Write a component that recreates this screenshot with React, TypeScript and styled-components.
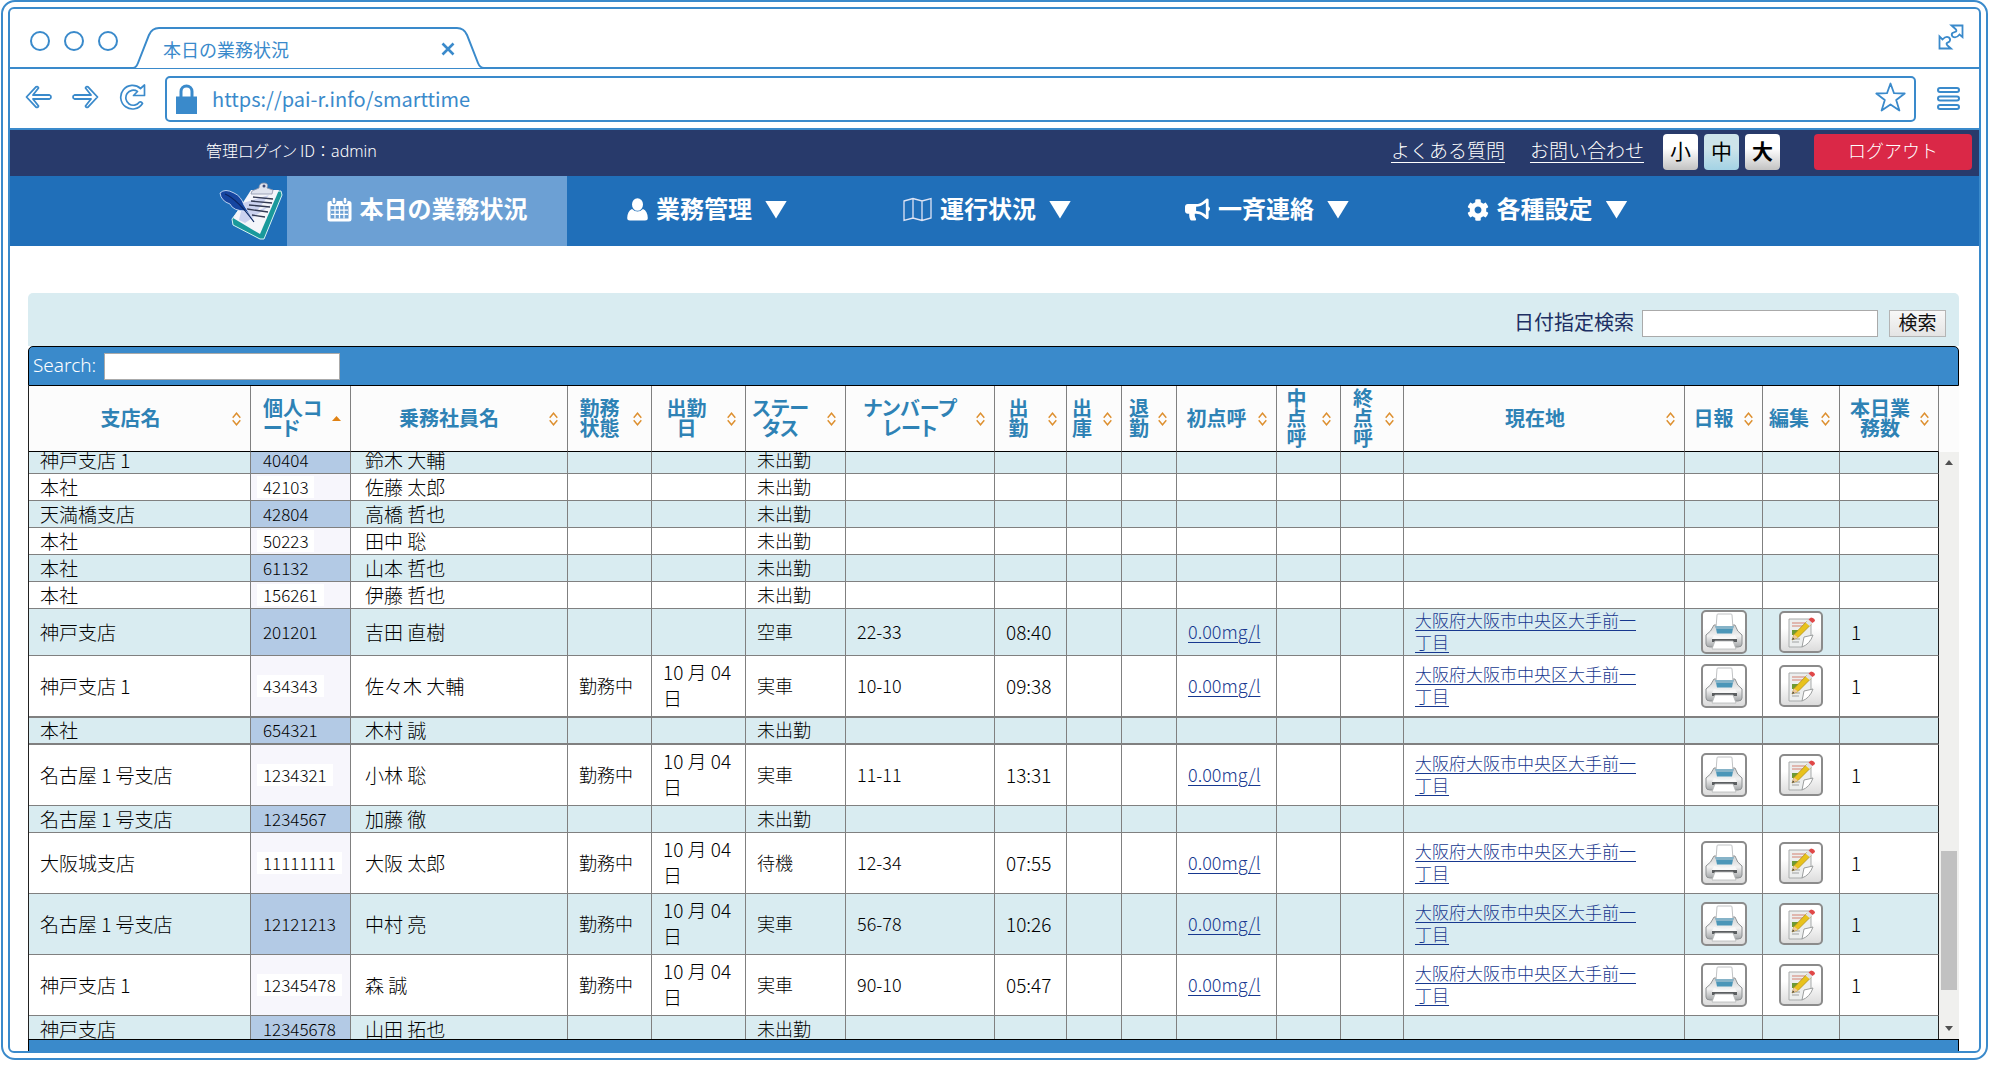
import React, { useLayoutEffect, useRef } from 'react';
import styled, { createGlobalStyle } from 'styled-components';
import { FaBullhorn, FaCog } from 'react-icons/fa';

const BLUE = '#3a8acb';
const LINE = '#808080';
const PALE = '#d9ecf1';
const JP = '"Noto Sans CJK JP", "Noto Sans", sans-serif';

const GlobalStyle = createGlobalStyle`
  *, *::before, *::after { box-sizing: border-box; }
  html, body { margin: 0; background: #fff; }
  body, button, input { font-family: ${JP}; }
  button { padding: 0; border: 0; background: none; color: inherit; cursor: pointer; }
`;

/* ---------- browser frame ---------- */

const OuterFrame = styled.div`
  height: calc(100vh - 6px);
  margin: 0 1px 6px;
  padding: 5px;
  border: 2px solid ${BLUE};
  border-radius: 14px;
  display: flex;
`;

const InnerFrame = styled.div`
  flex: 1;
  min-width: 0;
  border: 2px solid ${BLUE};
  border-radius: 6px;
  display: flex;
  flex-direction: column;
`;

const TabStrip = styled.div`
  height: 60px;
  display: flex;
  align-items: flex-end;
  padding: 0 15px 0 20px;
  box-shadow: inset 0 -2px 0 ${BLUE};
`;

const WindowDots = styled.div`
  display: flex;
  gap: 14px;
  padding-bottom: 18px;
  width: 103px;
`;

const Dot = styled.button`
  width: 20px;
  height: 20px;
  border: 2px solid ${BLUE};
  border-radius: 50%;
`;

const Tab = styled.div`
  position: relative;
  width: 352px;
  height: 42px;
  padding: 2px 30px 0 30px;
  display: flex;
  align-items: center;
  justify-content: space-between;
  color: ${BLUE};
  font-size: 18px;
  line-height: 28px;
`;

const TabShape = styled.svg`
  position: absolute;
  inset: 0;
`;

const TabTitle = styled.span`
  position: relative;
`;

const TabClose = styled.button`
  position: relative;
  width: 14px;
  height: 28px;
  display: flex;
  align-items: center;
`;

const ExpandButton = styled.button`
  margin-left: auto;
  padding-bottom: 19px;
  line-height: 0;
`;

const AddressRow = styled.div`
  height: 61px;
  display: flex;
  align-items: center;
  padding: 0 19px 0 15px;
  border-bottom: 2px solid ${BLUE};
  line-height: 0;
`;

const HistoryButtons = styled.div`
  display: flex;
  gap: 20px;
  width: 140px;
`;

const AddressBox = styled.div`
  flex: 1;
  height: 46px;
  display: flex;
  align-items: center;
  padding: 0 8px 0 9px;
  border: 2px solid ${BLUE};
  border-radius: 5px;
`;

const AddressInput = styled.input`
  flex: 1;
  height: 30px;
  margin: 0 16px 0 15px;
  padding: 0;
  border: 0;
  outline: 0;
  color: ${BLUE};
  font-size: 20px;
`;

const MenuButton = styled.button`
  margin-left: 21px;
  line-height: 0;
`;

/* ---------- application header ---------- */

const AccountBar = styled.header`
  height: 46px;
  display: flex;
  align-items: center;
  padding: 0 7px 2px 196px;
  background: #283a6b;
  color: #fff;
  font-size: 16px;
  font-weight: 300;
`;

const LoginId = styled.span`
  flex: 1;
  padding-bottom: 5px;
`;

const LoginLabel = styled.span`
  font-feature-settings: 'palt';
`;

const LoginName = styled.span`
  font-family: "Noto Sans", sans-serif;
`;

const HelpLinks = styled.nav`
  display: flex;
  gap: 25px;
  margin-right: 19px;
  padding-bottom: 5px;
  font-size: 19px;
`;

const HelpLink = styled.a`
  color: #fff;
  text-underline-offset: 4px;
  text-decoration-thickness: 1px;
`;

const SizeButtons = styled.div`
  display: flex;
  gap: 6px;
  margin-right: 34px;
`;

const SizeButton = styled.button<{ $active?: boolean; $bold?: boolean }>`
  width: 35px;
  height: 36px;
  padding-bottom: 4px;
  border-radius: 4px;
  background: ${p => p.$active
    ? 'linear-gradient(#cde4ea 40%, #a3d2e4)'
    : 'linear-gradient(#fff 40%, #c2c2c2)'};
  color: #000;
  font-size: 21px;
  font-weight: ${p => (p.$bold ? 700 : 400)};
  line-height: 32px;
`;

const LogoutButton = styled.button`
  width: 158px;
  height: 36px;
  padding-bottom: 4px;
  border-radius: 4px;
  background: #da2847;
  color: #fff;
  font-size: 18px;
  font-weight: 300;
  line-height: 32px;
`;

const MainNav = styled.nav`
  height: 70px;
  display: flex;
  align-items: stretch;
  padding-left: 209px;
  background: #206fb9;
`;

const Logo = styled.a`
  width: 68px;
  display: flex;
  align-items: center;
`;

const NavItem = styled.button<{ $active?: boolean }>`
  flex: 0 1 280px;
  display: flex;
  align-items: center;
  justify-content: center;
  gap: 8px;
  padding-bottom: 3px;
  background: ${p => (p.$active ? '#6ca0d4' : 'none')};
  color: #fff;
  font-size: 24px;
  font-weight: 700;
  line-height: 36px;
  white-space: nowrap;
`;

const NavText = styled.span`
  padding-bottom: 3px;
`;

const NavCaret = styled.span`
  width: 22px;
  height: 18px;
  margin-left: 5px;
  background: #fff;
  clip-path: polygon(0 0, 100% 0, 50% 100%);
`;

/* ---------- list ---------- */

const Content = styled.main`
  flex: 1;
  min-height: 0;
  display: flex;
  flex-direction: column;
  padding: 47px 20px 0 18px;
`;

const DateSearch = styled.form`
  height: 53px;
  display: flex;
  align-items: center;
  justify-content: flex-end;
  padding: 7px 13px 0;
  background: ${PALE};
  border-radius: 5px 5px 0 0;
  color: #1d2f63;
  font-size: 20px;
`;

const FieldLabel = styled.label`
  padding-bottom: 3px;
  line-height: 28px;
`;

const SearchField = styled.input`
  width: 236px;
  height: 27px;
  margin: 0 11px 0 8px;
  padding: 0 6px;
  border: 1px solid #aaa;
  background: #fff;
  font-size: 18px;
`;

const SearchButton = styled.button`
  width: 57px;
  height: 27px;
  padding-bottom: 2px;
  border: 1px solid #b4b4b4;
  background: linear-gradient(#f8f8f8, #e4e4e4);
  color: #111;
  font-size: 19px;
  line-height: 22px;
`;

const FilterBar = styled.div`
  height: 40px;
  display: flex;
  align-items: center;
  padding: 0 4px;
  border: 1px solid #000;
  border-radius: 5px 5px 0 0;
  background: ${BLUE};
  color: #fff;
  font-family: "Noto Sans", sans-serif;
  font-size: 19px;
  font-weight: 300;
`;

const HeadArea = styled.div`
  padding-right: 20px;
  border-left: 1px solid #222;
  background: #fcfcfc;
`;

const BodyArea = styled.div`
  flex: 1;
  min-height: 0;
  display: flex;
  border-left: 1px solid #222;
`;

const Scroller = styled.div`
  flex: 1;
  min-width: 0;
  overflow: hidden;
`;

const Grid = styled.table`
  width: 100%;
  table-layout: fixed;
  border-collapse: separate;
  border-spacing: 0;
`;

const HeadCell = styled.th`
  height: 66px;
  padding: 0;
  border-right: 1px solid ${LINE};
  border-bottom: 1px solid #000;
  color: #2e82b5;
  font-size: 20px;
  font-weight: 700;
  line-height: 20px;
`;

const HeadInner = styled.div`
  display: flex;
  align-items: center;
`;

const HeadLabel = styled.span<{ $left?: boolean }>`
  flex: 1;
  padding-bottom: 2px;
  padding-left: ${p => (p.$left ? 12 : 0)}px;
  text-align: ${p => (p.$left ? 'left' : 'center')};
  white-space: nowrap;
  font-feature-settings: 'palt';
`;

const SortButton = styled.button<{ $slot: number }>`
  width: ${p => p.$slot}px;
  padding-right: 9px;
  display: flex;
  justify-content: flex-end;
  flex: none;
  & > svg { flex: none; }
`;

type RowSize = 'line' | 'mid' | 'tall';
const rowHeight: Record<RowSize, number> = { line: 27, mid: 47, tall: 61 };

const Row = styled.tr<{ $size: RowSize; $thick?: boolean }>`
  height: ${p => rowHeight[p.$size] + (p.$thick && p.$size === 'tall' ? 1 : 0)}px;
  background: #fff;
  &:nth-child(odd) { background: ${PALE}; }
  & > td { border-bottom: ${p => (p.$thick ? 2 : 1)}px solid ${LINE}; }
`;

const Cell = styled.td<{ $small?: boolean }>`
  padding: 0 0 2px 11px;
  border-right: 1px solid ${LINE};
  color: #000;
  font-size: ${p => (p.$small ? 18 : 19)}px;
  font-weight: 300;
  line-height: 23px;
  white-space: nowrap;
  &:last-child { border-right-color: #222; }
`;

const CodeCell = styled(Cell)`
  padding-left: 6px;
  background: #f7f6fc;
  font-size: 17px;
  tr:nth-child(odd) > & { background: #b3cae5; }
`;

const Code = styled.span`
  display: inline-block;
  padding: 0 6px;
  line-height: 22px;
  tr:nth-child(even) > td > & { background: #fff; }
`;

const NameCell = styled(Cell)`
  padding-left: 14px;
`;

const DateCell = styled(Cell)`
  line-height: 26px;
`;

const IconCell = styled(Cell)`
  padding: 0;
  text-align: center;
  line-height: 0;
`;

const CellLink = styled.a`
  color: #17388f;
  text-underline-offset: 3px;
  text-decoration-thickness: 1px;
`;

const AddressLink = styled(CellLink)`
  font-size: 17px;
  line-height: 22px;
  display: inline-block;
`;

const ToolButton = styled.button<{ $w: number; $h: number }>`
  width: ${p => p.$w}px;
  height: ${p => p.$h}px;
  border: 2px solid #8b8b8b;
  border-radius: 5px;
  background: linear-gradient(#fff 40%, #dcdcdc);
  display: inline-flex;
  align-items: center;
  justify-content: center;
`;

const ScrollTrack = styled.div`
  width: 20px;
  display: flex;
  flex-direction: column;
  align-items: center;
  padding: 8px 2px;
  background: #f0f0ee;
`;

const ScrollThumb = styled.div`
  width: 16px;
  height: 139px;
  margin: auto 0 36px;
  background: #c1c1c1;
`;

const Arrow = styled.span<{ $down?: boolean }>`
  width: 8px;
  height: 5px;
  background: #505050;
  clip-path: ${p => (p.$down ? 'polygon(0 0, 100% 0, 50% 100%)' : 'polygon(0 100%, 100% 100%, 50% 0)')};
`;

const FootBar = styled.div`
  height: 12px;
  border: 1px solid #000;
  border-bottom: 0;
  background: ${BLUE};
`;

/* ---------- drawings ---------- */

const ExpandIcon = () => (
  <svg width="26" height="26" viewBox="0 0 26 26" fill="#fff" stroke={BLUE} strokeWidth="1.8">
    <path d="M13.500 1.500H24.500V13L21.500 10.500Q18 15 14.500 12.500Q13 10.500 14.500 9L18 7.500Q19 6.500 17.500 5Z" />
    <path d="M1.500 12.500L4.500 15.500Q8 11.500 11 13.500Q13 15.500 11.500 17.500L9 19Q8 20 9.500 21.500L13 24.500H1.500Z" />
  </svg>
);

const BackIcon = () => (
  <svg width="27" height="24" viewBox="0 0 27 24" fill="#fff" stroke={BLUE} strokeWidth="1.8" strokeLinejoin="round">
    <path d="M1.500 12L11 1.800Q13 1 13.500 3L8 10H24.500Q26 10.500 26 12T24.500 14H8L13.500 21Q13 23 11 22.200Z" />
  </svg>
);

const ForwardIcon = () => (
  <svg width="27" height="24" viewBox="0 0 27 24" fill="#fff" stroke={BLUE} strokeWidth="1.8" strokeLinejoin="round">
    <path d="M25.500 12L16 1.800Q14 1 13.500 3L19 10H2.500Q1 10.500 1 12T2.500 14H19L13.500 21Q14 23 16 22.200Z" />
  </svg>
);

const ReloadIcon = () => (
  <svg width="27" height="26" viewBox="0 0 27 26" fill="#fff" stroke={BLUE} strokeWidth="1.700" strokeLinejoin="round">
    <path d="M21.500 4.500L25.500 1V11.500H14.500L18.500 7.500A7.500 7.500 0 1 0 20.500 18Q22.500 17.500 23.500 19.500A11.800 11.800 0 1 1 21.500 4.500Z" />
  </svg>
);

const LockIcon = () => (
  <svg width="21" height="30" viewBox="0 0 21 30">
    <path d="M5 14V7.500A5.500 5.500 0 0 1 16 7.500V14" fill="none" stroke={BLUE} strokeWidth="3" />
    <rect x="0" y="12.500" width="21" height="17.500" fill={BLUE} />
  </svg>
);

const StarIcon = () => (
  <svg width="31" height="30" viewBox="0 0 31 30" fill="none" stroke={BLUE} strokeWidth="1.800" strokeLinejoin="round">
    <path d="M15.500 1.500L19 11.200L29.700 11.500L21.200 18L24.400 28.500L15.500 22.500L6.600 28.500L9.800 18L1.300 11.500L12 11.200Z" />
  </svg>
);

const MenuIcon = () => (
  <svg width="23" height="23" viewBox="0 0 23 23" fill="#fff" stroke={BLUE} strokeWidth="2">
    <rect x="1" y="1" width="21" height="4" rx="2" />
    <rect x="1" y="9.500" width="21" height="4" rx="2" />
    <rect x="1" y="18" width="21" height="4" rx="2" />
  </svg>
);

const LogoMark = () => (
  <svg width="64" height="60" viewBox="0 0 64 60">
    <path d="M33 11L62 10L63 14L45 58L41 58L14 44L13 38Z" fill="#19999b" stroke="#d8f3f3" strokeWidth="1" />
    <path d="M32 9L60 9L41 53L14 37Z" fill="#f4f5fa" />
    <path d="M24 22L50 14L38 30L52 24L26 42L20 39Z" fill="#b9c3ea" opacity=".7" />
    <path d="M33 10L40 7Q40 2 45 2T48 7L54 9L53 13L32 13Z" fill="#dfe3ee" stroke="#8c93a8" strokeWidth=".8" />
    <circle cx="45" cy="5" r="1.500" fill="#3f4b78" />
    <path d="M34 16L54 18M32 20L53 22M30 24L51 26M28 28L49 31M33 34L46 36" stroke="#333a52" strokeWidth="1.300" />
    <path d="M1 12Q6 7 15 12Q22 15 25 24L35 40L27 30Q14 30 11 23Q2 20 1 12Z" fill="#1645a0" stroke="#e2ecff" strokeWidth=".8" />
    <path d="M6 13Q18 18 35 41" fill="none" stroke="#0b2560" strokeWidth="1.200" />
  </svg>
);

const CalendarIcon = () => (
  <svg width="25" height="25" viewBox="0 0 25 25">
    <path fillRule="evenodd" fill="#fff" d="M3 4H22Q24.500 4 24.500 6.500V22Q24.500 24.500 22 24.500H3Q.5 24.500 .5 22V6.500Q.5 4 3 4ZM3.500 9V21.500H21.500V9Z" />
    <path fill="none" stroke="#fff" strokeWidth="1.300" d="M4 13.200H21M4 17.300H21M8 9V21.500M12.500 9V21.500M17 9V21.500" />
    <path stroke="#6ca0d4" strokeWidth="5" strokeLinecap="round" d="M7 3V5M18 3V5" />
    <path stroke="#fff" strokeWidth="2.600" strokeLinecap="round" d="M7 2V5M18 2V5" />
  </svg>
);

const UserIcon = () => (
  <svg width="21" height="23" viewBox="0 0 21 23" fill="#fff">
    <ellipse cx="10.500" cy="6.500" rx="5.500" ry="6.300" />
    <path d="M5 11Q10.500 16 16 11Q20.500 13 20.800 20Q20.800 22.500 18 22.500H3Q.2 22.500 .2 20Q.5 13 5 11Z" />
  </svg>
);

const MapIcon = () => (
  <svg width="29" height="25" viewBox="0 0 29 25" fill="none" stroke="#dfe4f4" strokeWidth="1.300">
    <path d="M1 4L10 1.500L19 4L28 1.500V21L19 23.500L10 21L1 23.500ZM10 1.500V21M19 4V23.500" />
  </svg>
);

const SortIcon = ({ active }: { active?: boolean }) =>
  active ? (
    <svg width="9" height="5" viewBox="0 0 9 5"><path d="M0 5L4.500 0L9 5Z" fill="#e08214" /></svg>
  ) : (
    <svg width="9" height="14" viewBox="0 0 9 14" fill="none" stroke="#dd8f2e" strokeWidth="1.400">
      <path d="M.7 5.800L4.500 1.200L8.300 5.800M.7 8.200L4.500 12.800L8.300 8.200" />
    </svg>
  );

const PrinterIcon = () => (
  <svg width="42" height="40" viewBox="2 2 42 40">
    <defs>
      <linearGradient id="prBody" x1="0" y1="0" x2="0" y2="1">
        <stop offset="0" stopColor="#cfd1d2" />
        <stop offset=".5" stopColor="#f2f2f2" />
        <stop offset="1" stopColor="#a4a7a9" />
      </linearGradient>
    </defs>
    <path d="M13 15H34Q36 22 41 25V34Q41 37 37 37H9Q5 37 5 34V25Q10 22 13 15Z" fill="url(#prBody)" stroke="#8f9294" strokeWidth="1" />
    <path d="M16 5Q16 4 17 4H30Q31 4 31 5L32 18H15Z" fill="#fff" stroke="#c0c2c4" strokeWidth="1" />
    <path d="M14.500 16H32.500L31 23.500H16Z" fill="#4b96b8" />
    <path d="M14.500 16H32.500L32 19H15Z" fill="#86b3c8" />
    <path d="M13 25Q23 28 34 25L36 29H11Z" fill="#f8f8f8" />
    <rect x="11" y="29" width="25" height="3" fill="#5b5e60" />
    <path d="M14 31H32L35 39H11Z" fill="#fff" stroke="#b5b7b8" strokeWidth=".8" />
  </svg>
);

const EditIcon = () => (
  <svg width="32" height="34" viewBox="0 0 32 34">
    <path d="M4 4H26V21L17 32L4 32Z" fill="#eceeee" stroke="#a8abab" strokeWidth="1" />
    <path d="M17 32L19 22L28 20Q25 29 17 32Z" fill="#fff" stroke="#9c9f9f" strokeWidth="1" />
    <path d="M7 8H22M7 11H20" stroke="#dba59b" strokeWidth="1.500" />
    <rect x="7" y="15" width="6" height="5" fill="#6d9a35" />
    <path d="M7 24H15M7 27H14" stroke="#b9bcbc" strokeWidth="1.400" />
    <path d="M7 25L9 19.500L22 6L26 9.500L13 22.500Z" fill="#e8c21c" stroke="#a98a14" strokeWidth=".7" />
    <path d="M7 25L9 19.500L13 22.500Z" fill="#efc9a0" />
    <path d="M7 25L8 22.500L9.500 24Z" fill="#444" />
    <path d="M20.500 7.500L23.500 4.500L27.500 8L24.500 11Z" fill="#dfe2e6" />
    <path d="M23.500 4.500L26 2.500Q30 3 30 6L27.500 8Z" fill="#e04848" />
  </svg>
);

/* ---------- data ---------- */

interface Column {
  lines: string[];
  width: number;
  slot: number;
  sorted?: boolean;
}

const columns: Column[] = [
  { lines: ['支店名'], width: 222, slot: 18 },
  { lines: ['個人コ', 'ード'], width: 100, slot: 20, sorted: true },
  { lines: ['乗務社員名'], width: 217, slot: 20 },
  { lines: ['勤務', '状態'], width: 84, slot: 20 },
  { lines: ['出勤', '日'], width: 94, slot: 24 },
  { lines: ['ステー', 'タス'], width: 100, slot: 30 },
  { lines: ['ナンバープ', 'レート'], width: 149, slot: 20 },
  { lines: ['出', '勤'], width: 72, slot: 24 },
  { lines: ['出', '庫'], width: 55, slot: 24 },
  { lines: ['退', '勤'], width: 55, slot: 20 },
  { lines: ['初点呼'], width: 100, slot: 20 },
  { lines: ['中', '点', '呼'], width: 64, slot: 24 },
  { lines: ['終', '点', '呼'], width: 63, slot: 18 },
  { lines: ['現在地'], width: 281, slot: 18 },
  { lines: ['日報'], width: 78, slot: 20 },
  { lines: ['編集'], width: 77, slot: 24 },
  { lines: ['本日業', '務数'], width: 99, slot: 18 },
];

interface Driver {
  branch: string;
  code: string;
  name: string;
  status: string;
  size: RowSize;
  working?: boolean;
  plate?: string;
  start?: string;
  thick?: boolean;
}

const drivers: Driver[] = [
  { branch: '神戸支店 1', code: '40404', name: '鈴木 大輔', status: '未出勤', size: 'line' },
  { branch: '本社', code: '42103', name: '佐藤 太郎', status: '未出勤', size: 'line' },
  { branch: '天満橋支店', code: '42804', name: '高橋 哲也', status: '未出勤', size: 'line' },
  { branch: '本社', code: '50223', name: '田中 聡', status: '未出勤', size: 'line' },
  { branch: '本社', code: '61132', name: '山本 哲也', status: '未出勤', size: 'line' },
  { branch: '本社', code: '156261', name: '伊藤 哲也', status: '未出勤', size: 'line' },
  { branch: '神戸支店', code: '201201', name: '吉田 直樹', status: '空車', size: 'mid', plate: '22-33', start: '08:40' },
  { branch: '神戸支店 1', code: '434343', name: '佐々木 大輔', status: '実車', size: 'tall', working: true, plate: '10-10', start: '09:38', thick: true },
  { branch: '本社', code: '654321', name: '木村 誠', status: '未出勤', size: 'line', thick: true },
  { branch: '名古屋 1 号支店', code: '1234321', name: '小林 聡', status: '実車', size: 'tall', working: true, plate: '11-11', start: '13:31' },
  { branch: '名古屋 1 号支店', code: '1234567', name: '加藤 徹', status: '未出勤', size: 'line' },
  { branch: '大阪城支店', code: '11111111', name: '大阪 太郎', status: '待機', size: 'tall', working: true, plate: '12-34', start: '07:55' },
  { branch: '名古屋 1 号支店', code: '12121213', name: '中村 亮', status: '実車', size: 'tall', working: true, plate: '56-78', start: '10:26' },
  { branch: '神戸支店 1', code: '12345478', name: '森 誠', status: '実車', size: 'tall', working: true, plate: '90-10', start: '05:47' },
  { branch: '神戸支店', code: '12345678', name: '山田 拓也', status: '未出勤', size: 'line' },
];

const ColumnWidths = () => (
  <colgroup>
    {columns.map((c, i) => <col key={i} style={{ width: c.width }} />)}
  </colgroup>
);

const withBreaks = (lines: string[]) =>
  lines.map((l, i) => <React.Fragment key={i}>{i > 0 && <br />}{l}</React.Fragment>);

const DriverRow = ({ d }: { d: Driver }) => (
  <Row $size={d.size} $thick={d.thick}>
    <Cell>{d.branch}</Cell>
    <CodeCell><Code>{d.code}</Code></CodeCell>
    <NameCell>{d.name}</NameCell>
    <Cell $small>{d.working && '勤務中'}</Cell>
    <DateCell>{d.working && withBreaks(['10 月 04', '日'])}</DateCell>
    <Cell $small>{d.status}</Cell>
    <Cell $small>{d.plate}</Cell>
    <Cell>{d.start}</Cell>
    <Cell />
    <Cell />
    <Cell $small>{d.start && <CellLink href="#check">0.00mg/l</CellLink>}</Cell>
    <Cell />
    <Cell />
    <Cell $small>{d.start && <AddressLink href="#map">{withBreaks(['大阪府大阪市中央区大手前一', '丁目'])}</AddressLink>}</Cell>
    <IconCell>{d.start && <ToolButton $w={46} $h={44} aria-label="日報"><PrinterIcon /></ToolButton>}</IconCell>
    <IconCell>{d.start && <ToolButton $w={44} $h={42} aria-label="編集"><EditIcon /></ToolButton>}</IconCell>
    <Cell>{d.start && '1'}</Cell>
  </Row>
);

export default function App() {
  const scroller = useRef<HTMLDivElement>(null);

  useLayoutEffect(() => {
    if (scroller.current) scroller.current.scrollTop = 5;
  }, []);

  return (
    <>
      <GlobalStyle />
      <OuterFrame>
        <InnerFrame>
          <TabStrip>
            <WindowDots>
              <Dot aria-label="close" />
              <Dot aria-label="minimize" />
              <Dot aria-label="maximize" />
            </WindowDots>
            <Tab>
              <TabShape width="352" height="42" viewBox="0 0 352 42">
                <path
                  d="M0 41Q3 41 5 36L16 8Q19 1 26 1H324Q331 1 334 8L345 36Q347 41 351 41"
                  fill="#fff" stroke={BLUE} strokeWidth="2"
                />
              </TabShape>
              <TabTitle>本日の業務状況</TabTitle>
              <TabClose aria-label="close tab">
                <svg width="14" height="14" viewBox="0 0 14 14" stroke={BLUE} strokeWidth="2.600">
                  <path d="M1.500 1.500L12.500 12.500M12.500 1.500L1.500 12.500" />
                </svg>
              </TabClose>
            </Tab>
            <ExpandButton aria-label="expand"><ExpandIcon /></ExpandButton>
          </TabStrip>
          <AddressRow>
            <HistoryButtons>
              <button aria-label="back"><BackIcon /></button>
              <button aria-label="forward"><ForwardIcon /></button>
              <button aria-label="reload"><ReloadIcon /></button>
            </HistoryButtons>
            <AddressBox>
              <LockIcon />
              <AddressInput aria-label="URL" defaultValue="https://pai-r.info/smarttime" />
              <button aria-label="bookmark"><StarIcon /></button>
            </AddressBox>
            <MenuButton aria-label="menu"><MenuIcon /></MenuButton>
          </AddressRow>

          <AccountBar>
            <LoginId><LoginLabel>管理ログイン ID</LoginLabel>：<LoginName>admin</LoginName></LoginId>
            <HelpLinks>
              <HelpLink href="#faq">よくある質問</HelpLink>
              <HelpLink href="#contact">お問い合わせ</HelpLink>
            </HelpLinks>
            <SizeButtons>
              <SizeButton>小</SizeButton>
              <SizeButton $active>中</SizeButton>
              <SizeButton $bold>大</SizeButton>
            </SizeButtons>
            <LogoutButton>ログアウト</LogoutButton>
          </AccountBar>

          <MainNav>
            <Logo href="#top" aria-label="smarttime"><LogoMark /></Logo>
            <NavItem $active><CalendarIcon /><NavText>本日の業務状況</NavText></NavItem>
            <NavItem><UserIcon /><NavText>業務管理</NavText><NavCaret /></NavItem>
            <NavItem><MapIcon /><NavText>運行状況</NavText><NavCaret /></NavItem>
            <NavItem><FaBullhorn size={25} /><NavText>一斉連絡</NavText><NavCaret /></NavItem>
            <NavItem><FaCog size={22} /><NavText>各種設定</NavText><NavCaret /></NavItem>
          </MainNav>

          <Content>
            <DateSearch onSubmit={e => e.preventDefault()}>
              <FieldLabel htmlFor="date">日付指定検索</FieldLabel>
              <SearchField id="date" />
              <SearchButton>検索</SearchButton>
            </DateSearch>
            <FilterBar>
              <FieldLabel htmlFor="filter">Search:</FieldLabel>
              <SearchField id="filter" />
            </FilterBar>
            <HeadArea>
              <Grid>
                <ColumnWidths />
                <thead>
                  <tr>
                    {columns.map((c, i) => (
                      <HeadCell key={i} scope="col">
                        <HeadInner>
                          <HeadLabel $left={c.sorted}>{withBreaks(c.lines)}</HeadLabel>
                          <SortButton $slot={c.slot} aria-label="sort"><SortIcon active={c.sorted} /></SortButton>
                        </HeadInner>
                      </HeadCell>
                    ))}
                  </tr>
                </thead>
              </Grid>
            </HeadArea>
            <BodyArea>
              <Scroller ref={scroller}>
                <Grid>
                  <ColumnWidths />
                  <tbody>
                    {drivers.map(d => <DriverRow key={d.code} d={d} />)}
                  </tbody>
                </Grid>
              </Scroller>
              <ScrollTrack aria-hidden="true">
                <Arrow />
                <ScrollThumb />
                <Arrow $down />
              </ScrollTrack>
            </BodyArea>
            <FootBar />
          </Content>
        </InnerFrame>
      </OuterFrame>
    </>
  );
}
